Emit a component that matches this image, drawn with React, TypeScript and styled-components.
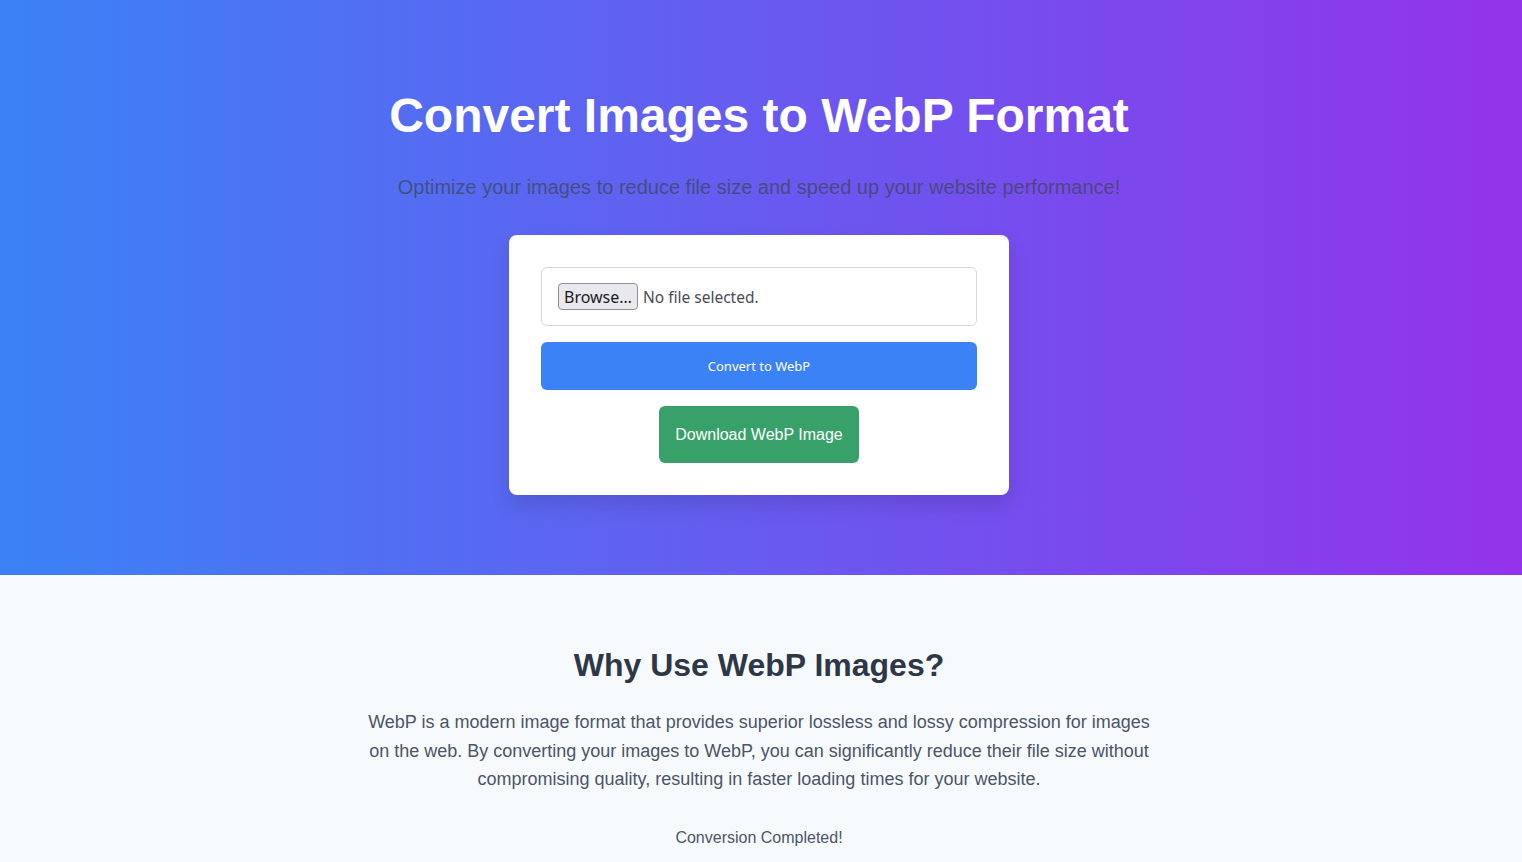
import styled, { createGlobalStyle } from 'styled-components';

const GlobalStyle = createGlobalStyle`
	html, body {
		margin: 0;
		padding: 0;
		background: #f7fafc;
		font-family: "Liberation Sans", Arial, sans-serif;
	}
	* {
		box-sizing: border-box;
	}
`;

const Hero = styled.header`
	background: linear-gradient(to right, #3b82f6, #9333ea);
	padding: 80px 20px 80px 16px;
	display: flex;
	flex-direction: column;
	align-items: center;
	text-align: center;
`;

const Title = styled.h1`
	margin: 0 0 20px;
	font-size: 48px;
	line-height: 72px;
	font-weight: 700;
	color: #ffffff;
`;

const Subtitle = styled.p`
	margin: 0 0 33px;
	font-size: 20px;
	line-height: 30px;
	color: rgba(60, 70, 90, 0.75);
`;

const Card = styled.div`
	width: 500px;
	background: #ffffff;
	border-radius: 8px;
	padding: 32px;
	box-shadow: 0 10px 20px rgba(0, 0, 0, 0.12);
	display: flex;
	flex-direction: column;
	align-items: center;
	gap: 16px;
`;

const FileField = styled.label`
	width: 100%;
	display: flex;
	align-items: center;
	gap: 5px;
	padding: 15px 16px;
	border: 1px solid #d6d6db;
	border-radius: 6px;
	font-family: "Noto Sans", "Open Sans", sans-serif;
	font-size: 15.5px;
	color: #4b4b55;
	cursor: pointer;
`;

const BrowseButton = styled.span`
	display: inline-flex;
	align-items: center;
	height: 27px;
	padding: 0 5px;
	background: #e9e9ed;
	border: 1px solid #8f8f9d;
	border-radius: 4px;
	color: #1b1b1f;
	font-size: 16px;
`;

const ConvertButton = styled.button`
	width: 100%;
	height: 48px;
	border: none;
	border-radius: 6px;
	background: #3b82f6;
	color: #ffffff;
	font-family: "Noto Sans", "Open Sans", sans-serif;
	font-size: 13px;
	cursor: pointer;
`;

const DownloadButton = styled.a`
	display: inline-block;
	padding: 16px;
	line-height: 25px;
	background: #38a169;
	border-radius: 6px;
	color: #ffffff;
	font-size: 16px;
	text-decoration: none;
`;

const Info = styled.section`
	padding: 66px 20px 16px 16px;
	display: flex;
	flex-direction: column;
	align-items: center;
	text-align: center;
`;

const InfoTitle = styled.h2`
	margin: 0 0 19px;
	font-size: 32px;
	line-height: 48px;
	font-weight: 700;
	color: #2d3748;
`;

const InfoText = styled.p`
	margin: 0 0 32px;
	max-width: 800px;
	font-size: 18px;
	line-height: 28.5px;
	color: #4a5568;
`;

const Status = styled.p`
	margin: 0;
	font-size: 16px;
	line-height: 24px;
	color: #4a5568;
`;

export default function App() {
	return (
		<>
			<GlobalStyle />
			<Hero>
				<Title>Convert Images to WebP Format</Title>
				<Subtitle>Optimize your images to reduce file size and speed up your website performance!</Subtitle>
				<Card>
					<FileField>
						<BrowseButton>Browse…</BrowseButton>
						<span>No file selected.</span>
					</FileField>
					<ConvertButton>Convert to WebP</ConvertButton>
					<DownloadButton href="#">Download WebP Image</DownloadButton>
				</Card>
			</Hero>
			<Info>
				<InfoTitle>Why Use WebP Images?</InfoTitle>
				<InfoText>
					WebP is a modern image format that provides superior lossless and lossy compression for images on the web.
					By converting your images to WebP, you can significantly reduce their file size without compromising
					quality, resulting in faster loading times for your website.
				</InfoText>
				<Status>Conversion Completed!</Status>
			</Info>
		</>
	);
}
